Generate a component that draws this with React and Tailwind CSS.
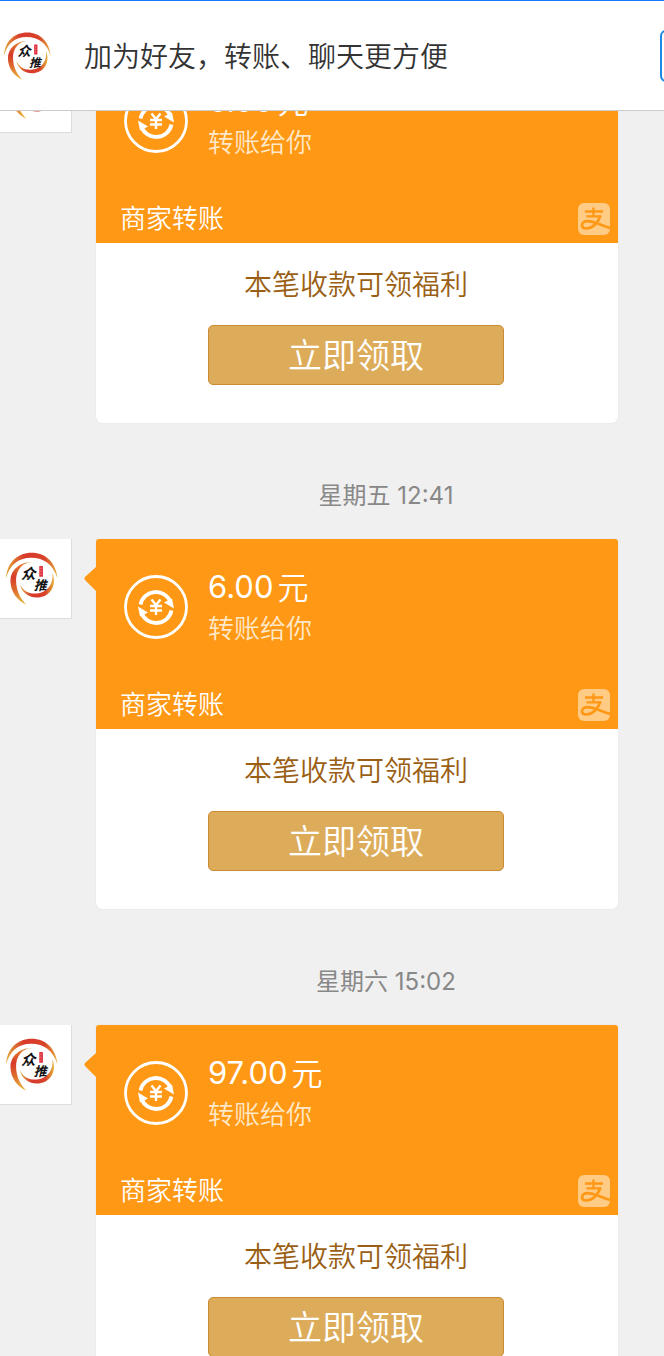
const messages = [
  { id: 1, time: null, amount: '6.00' },
  { id: 2, time: '星期五 12:41', amount: '6.00' },
  { id: 3, time: '星期六 15:02', amount: '97.00' },
];

const BrandLogo = ({ className }) => (
  <svg viewBox="0 0 162 166" className={className} role="img" aria-label="众推">
    <defs>
      <linearGradient id="sweep" x1="0" y1="0" x2="1" y2="0">
        <stop offset="0" stopColor="#e3a93a" />
        <stop offset="0.35" stopColor="#d8392b" />
        <stop offset="0.75" stopColor="#d8432b" />
        <stop offset="1" stopColor="#e6b23c" />
      </linearGradient>
      <linearGradient id="tail" x1="0" y1="0" x2="0" y2="1">
        <stop offset="0" stopColor="#e58a30" />
        <stop offset="0.35" stopColor="#d63a2a" />
        <stop offset="0.65" stopColor="#dd6a2c" />
        <stop offset="1" stopColor="#e9bd45" />
      </linearGradient>
    </defs>
    {/* outer sweep over the top */}
    <path d="M3 82C5 34 38 5 80 5c43 0 74 31 78 78C146 42 118 20 78 20 39 20 13 43 3 82Z" fill="url(#sweep)" />
    {/* left sweep running down into the tail */}
    <path d="M84 33C52 33 32 57 33 91c1 31 13 51 31 71C36 149 17 124 16 92 15 58 43 32 84 33Z" fill="url(#tail)" />
    {/* bottom right sweep */}
    <path d="M44 98c9 24 30 33 53 30 31-4 49-28 46-61 13 37-5 68-41 73-30 3-53-15-58-42Z" fill="url(#sweep)" />
    <rect x="103" y="45" width="11" height="33" rx="2" fill="#df2f3c" />
    <path d="M108 50v5M108 59v5M108 68v4" stroke="#f08a90" strokeWidth="3" />
    <text x="48" y="84" fontSize="44" fontStyle="italic" fontWeight="700" fill="#111">众</text>
    <text x="86" y="119" fontSize="39" fontStyle="italic" fontWeight="700" fill="#111">推</text>
  </svg>
);

const TransferIcon = () => (
  <svg viewBox="0 0 64 64" className="size-16 shrink-0" fill="none" stroke="#fff" aria-hidden="true">
    <circle cx="32" cy="32" r="30.5" strokeWidth="2.8" />
    <path d="M16.500 29.500A15.700 15.700 0 0 1 46.500 27" strokeWidth="3.8" />
    <path d="M47.500 35.500A15.700 15.700 0 0 1 17.500 38" strokeWidth="3.8" />
    <path d="M40 27.500l10 6-2-10Z" fill="#fff" stroke="none" />
    <path d="M24 37.500l-10-6 2 10Z" fill="#fff" stroke="none" />
    <path d="M27.500 24.500l4.500 5.500 4.500-5.500M26 31h12M26 35.500h12M32 30V40" strokeWidth="2.400" />
  </svg>
);

const AlipayMark = () => (
  <svg viewBox="0 0 32 32" className="size-8" fill="none" aria-label="支付宝" role="img">
    <rect width="32" height="32" rx="6" fill="#ffcb85" />
    <g stroke="#ff9814">
      <path d="M15.500 4.500v9M7 8.500h18M8.500 13.300h14.500" strokeWidth="2.300" />
      <path d="M22.500 12.500C20 20 14.500 25.500 8.500 25.500c-3 0-4.500-1.300-4.500-3.300 0-2.300 2.300-4 5.500-4C15.500 18.200 21 21.500 32 25" strokeWidth="2.700" />
    </g>
  </svg>
);

const TransferCard = ({ amount }) => (
  <article className="relative min-w-0 flex-1">
    {/* bubble tail */}
    <svg viewBox="0 0 12 24" className="absolute top-7 -left-3 h-6 w-3" aria-hidden="true">
      <path d="M12 0v24L1.500 13.500q-2-2 0-4Z" fill="#ff9814" />
    </svg>

    <div className="overflow-hidden rounded-t-[3px] rounded-b-md bg-white shadow-[0_0_1px_#cccccc]">
      <div className="flex h-[190px] flex-col justify-between bg-[#ff9814] pt-[26px] pr-2 pb-2 pl-6 text-white">
        <div className="flex gap-5 pl-1">
          <div className="pt-[10px]">
            <TransferIcon />
          </div>
          <div>
            <p className="flex items-center gap-1 text-[31px] leading-10">
              <span className="pt-0.5 font-[Inter]">{amount}</span>
              <span className="font-[350]">元</span>
            </p>
            <p className="text-[26px] leading-10 font-[350] text-[#ffe8c8]">转账给你</p>
          </div>
        </div>
        <div className="flex items-end justify-between">
          <p className="pb-0.5 text-[26px] leading-8 font-[350]">商家转账</p>
          <AlipayMark />
        </div>
      </div>

      <div className="flex h-[180px] flex-col items-center pt-5 pr-0.5">
        <p className="text-[28px] leading-10 font-[350] text-[#9a5f14]">本笔收款可领福利</p>
        <button
          type="button"
          className="mt-[22px] h-[60px] w-[296px] rounded-[5px] border border-[#cd8a35] bg-[#ddac5b] pb-0.5 text-[34px] leading-10 font-[350] text-white"
        >
          立即领取
        </button>
      </div>
    </div>
  </article>
);

const Message = ({ time, amount }) => (
  <li>
    {time && (
      <p className="flex h-[116px] items-center justify-center pt-[30px] pl-[108px] text-2xl text-[#888888]">
        <time className="font-[Inter,'Noto_Sans_CJK_SC',sans-serif]">{time}</time>
      </p>
    )}
    <div className="flex items-start gap-6 pr-[46px]">
      <div className="-ml-2 flex size-20 shrink-0 items-center border-r border-b border-[#dddddd] bg-white pl-[13px]">
        <BrandLogo className="h-[55px] w-[54px]" />
      </div>
      <TransferCard amount={amount} />
    </div>
  </li>
);

const App = () => {
  return (
    <div className="h-screen overflow-hidden bg-[#f0f0f0] font-['Noto_Sans_CJK_SC',sans-serif]">
      <header className="relative z-10 flex h-[111px] items-center overflow-hidden border-t border-b border-t-[#1677ff] border-b-[#cccccc] bg-white pl-[3px]">
        <BrandLogo className="h-[50px] w-[49px] shrink-0" />
        <h1 className="ml-8 flex-1 pb-0.5 text-[28px] font-[350] whitespace-nowrap text-[#333333]">
          加为好友，转账、聊天更方便
        </h1>
        {/* add button sits mostly past the right edge */}
        <button
          type="button"
          aria-label="加好友"
          className="-mr-24 h-[52px] w-[100px] shrink-0 rounded-md border-2 border-[#1e88e5] bg-white"
        />
      </header>

      <main>
        <ul className="-mt-[58px]">
          {messages.map(message => (
            <Message key={message.id} time={message.time} amount={message.amount} />
          ))}
        </ul>
      </main>
    </div>
  );
};

export default App;
